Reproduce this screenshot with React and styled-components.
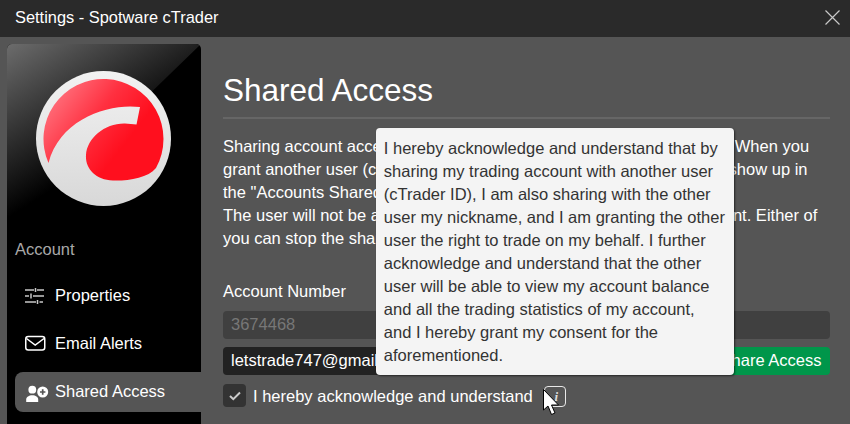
import React from 'react';
import styled, { createGlobalStyle } from 'styled-components';

const GlobalStyle = createGlobalStyle`
  html, body {
    margin: 0;
    width: 850px;
    height: 424px;
    overflow: hidden;
    background: #555;
  }
  * { box-sizing: border-box; }
`;

const Window = styled.div`
  width: 850px;
  height: 424px;
  display: flex;
  flex-direction: column;
  overflow: hidden;
  font-family: "Liberation Sans", Arial, sans-serif;
  font-size: 16.5px;
  color: #fff;
`;

const TitleBar = styled.header`
  flex: none;
  height: 37px;
  padding: 0 10px 3px 15px;
  display: flex;
  align-items: center;
  justify-content: space-between;
  background: #2a2a2a;
  font-size: 16.4px;
`;

const Body = styled.div`
  flex: 1;
  display: flex;
  min-height: 0;
  padding: 7px 20px 0 7px;
  gap: 22px;
`;

const Sidebar = styled.aside`
  flex: none;
  width: 194px;
  height: 400px;
  background: #000;
  border-radius: 5px 5px 0 0;
  overflow: hidden;
`;

const LogoBox = styled.div`
  height: 188px;
  svg { display: block; }
`;

const GroupLabel = styled.div`
  padding-left: 8px;
  height: 36px;
  line-height: 34px;
  color: #a8a8a8;
`;

const Nav = styled.nav`
  display: flex;
  flex-direction: column;
  gap: 8px;
  padding-left: 8px;
  margin-top: 8px;
`;

const NavItem = styled.div`
  height: 40px;
  padding: 0 0 2px 10px;
  display: flex;
  align-items: center;
  border-radius: 8px 0 0 8px;
  background: ${p => (p.$active ? '#555' : 'transparent')};
`;

const NavIcon = styled.span`
  width: 30px;
  flex: none;
  display: flex;
  svg { display: block; }
`;

const Content = styled.main`
  flex: 1;
  min-width: 0;
`;

const Heading = styled.h1`
  margin: 0;
  height: 75px;
  padding-top: 27px;
  font-size: 31.5px;
  line-height: 38px;
  font-weight: 400;
  border-bottom: 2px solid #666;
`;

const Description = styled.p`
  margin: 16px 0 0;
  line-height: 23px;
  white-space: nowrap;
`;

const FieldLabel = styled.div`
  margin-top: 32px;
  line-height: 18px;
`;

const Input = styled.div`
  height: 28px;
  padding: 0 8px 2px;
  display: flex;
  align-items: center;
  border-radius: 4px;
  background: ${p => (p.$disabled ? '#404040' : '#222')};
  color: ${p => (p.$disabled ? '#777' : '#fff')};
`;

const AccountInput = styled(Input)`
  margin-top: 11px;
`;

const EmailRow = styled.div`
  display: flex;
  gap: 8px;
  margin-top: 8px;
  ${Input} { flex: 1; }
`;

const ShareButton = styled.div`
  width: 118px;
  height: 28px;
  padding-bottom: 2px;
  display: flex;
  align-items: center;
  justify-content: center;
  border-radius: 4px;
  background: #00964a;
`;

const ConsentRow = styled.div`
  display: flex;
  align-items: center;
  margin-top: 9px;
`;

const Checkbox = styled.span`
  width: 23px;
  height: 23px;
  margin-right: 7px;
  display: flex;
  align-items: center;
  justify-content: center;
  border-radius: 4px;
  background: #333;
`;

const ConsentText = styled.span`
  margin-top: 2px;
`;

const InfoButton = styled.span`
  position: relative;
  width: 22px;
  height: 21px;
  margin: 2px 0 0 11px;
  padding-left: 3px;
  display: flex;
  align-items: center;
  justify-content: center;
  border: 1px solid #e8e8e8;
  border-radius: 4px;
  color: #ddd;
  font: italic 700 13px "Liberation Serif", serif;
`;

const Tooltip = styled.div`
  position: absolute;
  left: 50%;
  bottom: 31px;
  width: 358px;
  height: 247px;
  padding: 9px 8px;
  transform: translateX(-50%);
  background: #f4f4f4;
  color: #333;
  border-radius: 4px;
  box-shadow: 1px 1px 2px rgba(0, 0, 0, 0.55);
  font: 400 16.5px/23px "Liberation Sans", Arial, sans-serif;
`;

const Pointer = styled.svg`
  position: absolute;
  left: -2px;
  top: 2px;
`;

const CloseIcon = () => (
  <svg width="15" height="15" viewBox="0 0 15 15" fill="none" stroke="#c8c8c8" strokeWidth="1.2">
    <path d="M0.5 0.5 14.5 14.5M14.5 0.5 0.5 14.5" />
  </svg>
);

const Logo = () => (
  <svg width="194" height="188" viewBox="7 44 194 188">
    <defs>
      <linearGradient id="gloss" gradientUnits="userSpaceOnUse" x1="7" y1="44" x2="100" y2="190">
        <stop offset="0" stopColor="#6c6c6c" />
        <stop offset="0.5" stopColor="#2c2c2c" />
        <stop offset="0.85" stopColor="#000" />
      </linearGradient>
      <linearGradient id="disc" x1="0" y1="0" x2="0" y2="1">
        <stop offset="0" stopColor="#f2f2f2" />
        <stop offset="1" stopColor="#d8d8d8" />
      </linearGradient>
      <linearGradient id="red" gradientUnits="userSpaceOnUse" x1="50" y1="95" x2="120" y2="150">
        <stop offset="0" stopColor="#ff7480" />
        <stop offset="0.55" stopColor="#ff3040" />
        <stop offset="1" stopColor="#ff0f1e" />
      </linearGradient>
    </defs>
    <path d="M7 44H201L7 232Z" fill="url(#gloss)" />
    <circle cx="103.5" cy="138.5" r="67.5" fill="url(#disc)" />
    <path
      d="M48.5 163A60 60 0 1 1 156 168C148 178 128 181 113 180.500C95 180 85 168 86 155C87 138 105 123 125 123.500L136.500 124.500L140 107C110 103 60 118 48.500 163Z"
      fill="url(#red)"
    />
  </svg>
);

const SlidersIcon = () => (
  <svg width="19" height="20" viewBox="0 0 19 20" fill="none" stroke="#c8c8c8" strokeWidth="1.5">
    <path d="M0 5H9M12 5H19M10.500 3V7" />
    <path d="M0 11H4M8 11H19M6 8.500V13.500" />
    <path d="M0 17H11M14.500 17H18M12.500 15V19" />
  </svg>
);

const MailIcon = () => (
  <svg width="21" height="20" viewBox="0 0 21 20" fill="none" stroke="#fff" strokeWidth="1.5">
    <rect x="0.750" y="3.500" width="19" height="13.500" rx="2.500" />
    <path d="M1.500 5.500 10.200 12 19 5.500" />
  </svg>
);

const UserPlusIcon = () => (
  <svg width="24" height="22" viewBox="0 0 24 22">
    <circle cx="7.300" cy="9.700" r="3.900" fill="#fff" />
    <path d="M1.200 22V19.500C1.200 17 4 15.300 7.300 15.300C10.600 15.300 13.200 17 13.200 19.500V22Z" fill="#fff" />
    <circle cx="17.700" cy="12" r="5.500" fill="#fff" />
    <path d="M17.700 9.300V14.700M15 12H20.400" stroke="#555" strokeWidth="1.700" />
  </svg>
);

const CheckIcon = () => (
  <svg width="12" height="10" viewBox="0 0 12 10" fill="none" stroke="#ccc" strokeWidth="2">
    <path d="M1 5 4.300 8.200 11 1.500" />
  </svg>
);

const CursorIcon = () => (
  <Pointer width="18" height="28" viewBox="0 0 18 28">
    <path d="M0.500 0.500V21L5 17 8.500 25.500 12 24 8.500 16H15.500Z" fill="#fff" stroke="#000" strokeWidth="1" />
  </Pointer>
);

const App = () => (
  <Window>
    <GlobalStyle />
    <TitleBar>
      <span>Settings - Spotware cTrader</span>
      <CloseIcon />
    </TitleBar>
    <Body>
      <Sidebar>
        <LogoBox>
          <Logo />
        </LogoBox>
        <GroupLabel>Account</GroupLabel>
        <Nav>
          <NavItem>
            <NavIcon><SlidersIcon /></NavIcon>
            Properties
          </NavItem>
          <NavItem>
            <NavIcon><MailIcon /></NavIcon>
            Email Alerts
          </NavItem>
          <NavItem $active>
            <NavIcon><UserPlusIcon /></NavIcon>
            Shared Access
          </NavItem>
        </Nav>
      </Sidebar>
      <Content>
        <Heading>Shared Access</Heading>
        <Description>
          Sharing account access lets another user view and use your account. When you<br />
          grant another user (cTrader ID) rights to an account, this account will show up in<br />
          the "Accounts Shared With Me" section of the other user.<br />
          The user will not be able to withdraw funds or make edits on an account. Either of<br />
          you can stop the sharing at any time.
        </Description>
        <FieldLabel>Account Number</FieldLabel>
        <AccountInput $disabled>3674468</AccountInput>
        <EmailRow>
          <Input>letstrade747@gmail.com</Input>
          <ShareButton>Share Access</ShareButton>
        </EmailRow>
        <ConsentRow>
          <Checkbox><CheckIcon /></Checkbox>
          <ConsentText>I hereby acknowledge and understand</ConsentText>
          <InfoButton>
            i
            <Tooltip>
              I hereby acknowledge and understand that by sharing my trading account with another
              user (cTrader ID), I am also sharing with the other user my nickname, and I am
              granting the other user the right to trade on my behalf. I further acknowledge and
              understand that the other user will be able to view my account balance and all the
              trading statistics of my account, and I hereby grant my consent for the
              aforementioned.
            </Tooltip>
            <CursorIcon />
          </InfoButton>
        </ConsentRow>
      </Content>
    </Body>
  </Window>
);

export default App;
